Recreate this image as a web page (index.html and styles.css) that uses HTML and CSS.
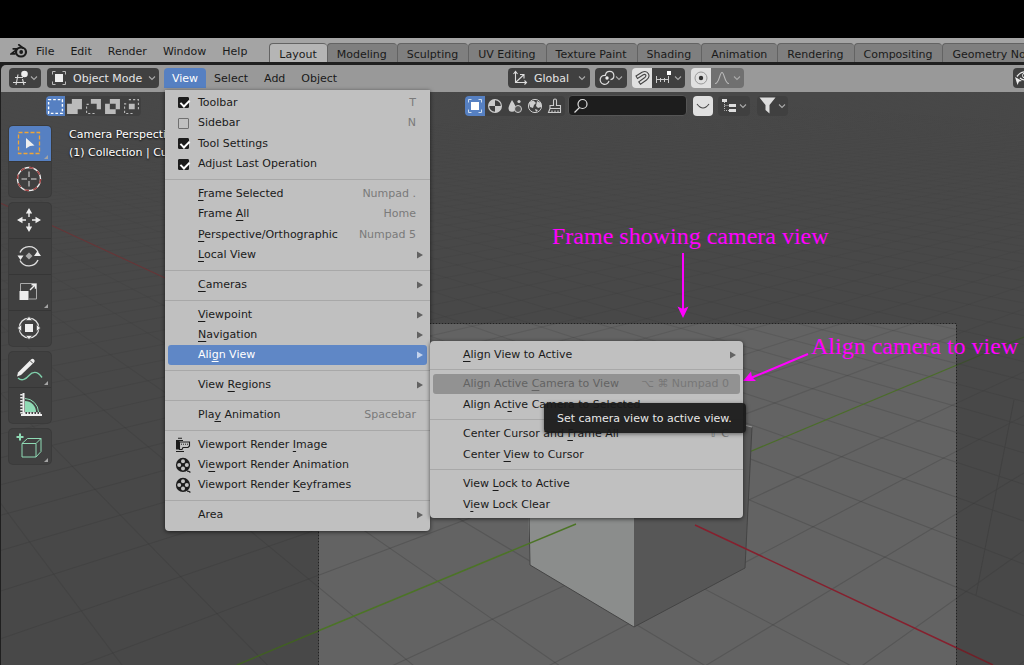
FILE: index.html
```html
<!DOCTYPE html>
<html lang="en">
<head>
<meta charset="utf-8">
<title>Blender – Align View</title>
<link rel="stylesheet" href="styles.css">
</head>
<body>
<svg class="defs" aria-hidden="true">
  <defs>
    <symbol id="chev" viewBox="0 0 8 8"><path d="M1 2.5 4 5.5 7 2.5" fill="none" stroke="currentColor" stroke-width="1.1"/></symbol>
    <symbol id="arrow" viewBox="0 0 6 8"><path d="M0 .5 6 4 0 7.500z" fill="currentColor"/></symbol>
    <symbol id="reel" viewBox="0 0 16 16"><path fill-rule="evenodd" fill="currentColor" d="M8 .8a7.1 7.1 0 1 0 0 14.2A7.1 7.1 0 1 0 8 .8zM8 2.2a2 2 0 1 1 0 4 2 2 0 1 1 0-4zM8 9.6a2 2 0 1 1 0 4 2 2 0 1 1 0-4zM4.2 5.9a2 2 0 1 1 0 4 2 2 0 1 1 0-4zM11.8 5.9a2 2 0 1 1 0 4 2 2 0 1 1 0-4z"/><path d="M12 14.2q2-.4 3.4 1.3" fill="none" stroke="currentColor" stroke-width="1.2"/></symbol>
  </defs>
</svg>

<div class="screen-top"></div>

<header class="topbar">
  <svg class="logo" viewBox="0 0 18 16" aria-label="Blender"><g fill="none" stroke="#1c1c1c" stroke-linecap="round"><ellipse cx="11" cy="9" rx="5" ry="4.500" stroke-width="2.200"/><path d="M7.500 5.800H3.200M13 5 8.800 1.800M7.600 5.800 1.400 10.800H5" stroke-width="1.700"/></g><circle cx="11.200" cy="9" r="1.900" fill="#1c1c1c"/></svg>
  <nav class="menubar" aria-label="Application">
    <button>File</button><button>Edit</button><button>Render</button><button>Window</button><button>Help</button>
  </nav>
  <nav class="tabs" aria-label="Workspaces">
    <button class="tab active">Layout</button><button class="tab">Modeling</button><button class="tab">Sculpting</button><button class="tab">UV Editing</button><button class="tab">Texture Paint</button><button class="tab">Shading</button><button class="tab">Animation</button><button class="tab">Rendering</button><button class="tab">Compositing</button><button class="tab">Geometry Nodes</button>
  </nav>
</header>

<main class="editor">
  <div class="editor-header">
    <button class="btn editor-type" aria-label="Editor type">
      <svg width="17" height="16" viewBox="0 0 17 16"><g fill="none" stroke="#ddd" stroke-width="1.1"><path d="M2 7.5h8M0 12.5h13M5 4.500 3 15M9.500 9 11 15"/></g><circle cx="11.500" cy="4" r="3.300" fill="#eee"/></svg>
      <svg width="8" height="8"><use href="#chev"/></svg>
    </button>
    <button class="btn mode">
      <svg width="16" height="16" viewBox="0 0 16 16"><path d="M1.500 4.500v-3h3M11.500 1.500h3v3M14.500 11.500v3h-3M4.500 14.500h-3v-3" fill="none" stroke="#bbb"/><path d="M4 4h8v8H4z" fill="#eee"/></svg>
      <span class="grow">Object Mode</span>
      <svg width="8" height="8"><use href="#chev"/></svg>
    </button>
    <nav class="menubar editor-menus" aria-label="Editor">
      <div class="menu-anchor">
        <button class="open" aria-expanded="true">View</button>
        <div class="menu view-menu">
          <div class="group g4">
            <label class="item"><input type="checkbox" class="tick" checked><span>Toolbar</span><kbd>T</kbd></label>
            <label class="item"><input type="checkbox" class="tick"><span>Sidebar</span><kbd>N</kbd></label>
            <label class="item"><input type="checkbox" class="tick" checked><span>Tool Settings</span></label>
            <label class="item"><input type="checkbox" class="tick" checked><span>Adjust Last Operation</span></label>
          </div>
          <div class="group g4">
            <button class="item"><span><u>F</u>rame Selected</span><kbd>Numpad .</kbd></button>
            <button class="item"><span>Frame <u>A</u>ll</span><kbd>Home</kbd></button>
            <button class="item"><span><u>P</u>erspective/Orthographic</span><kbd>Numpad 5</kbd></button>
            <button class="item"><span><u>L</u>ocal View</span><svg class="more"><use href="#arrow"/></svg></button>
          </div>
          <div class="group">
            <button class="item"><span><u>C</u>ameras</span><svg class="more"><use href="#arrow"/></svg></button>
          </div>
          <div class="group g3">
            <button class="item"><span><u>V</u>iewpoint</span><svg class="more"><use href="#arrow"/></svg></button>
            <button class="item"><span><u>N</u>avigation</span><svg class="more"><use href="#arrow"/></svg></button>
            <div class="menu-anchor">
              <button class="item hot" aria-expanded="true"><span>Ali<u>g</u>n View</span><svg class="more"><use href="#arrow"/></svg></button>
              <div class="menu submenu">
                <div class="group">
                  <button class="item"><span><u>A</u>lign View to Active</span><svg class="more"><use href="#arrow"/></svg></button>
                </div>
                <div class="group g2">
                  <div class="menu-anchor">
                    <button class="item dim" aria-describedby="tip"><span>Align Active <u>C</u>amera to View</span><kbd>⌥ ⌘ Numpad 0</kbd></button>
                    <div class="tooltip" id="tip" role="tooltip">Set camera view to active view.</div>
                  </div>
                  <button class="item"><span>Align Ac<u>t</u>ive Camera to Selected</span></button>
                </div>
                <div class="group g2">
                  <button class="item"><span>Center Cursor and <u>F</u>rame All</span><kbd>⇧ C</kbd></button>
                  <button class="item"><span>Center <u>V</u>iew to Cursor</span></button>
                </div>
                <div class="group g2">
                  <button class="item"><span>View <u>L</u>ock to Active</span></button>
                  <button class="item"><span>V<u>i</u>ew Lock Clear</span></button>
                </div>
              </div>
            </div>
          </div>
          <div class="group">
            <button class="item"><span>View <u>R</u>egions</span><svg class="more"><use href="#arrow"/></svg></button>
          </div>
          <div class="group">
            <button class="item"><span>Pla<u>y</u> Animation</span><kbd>Spacebar</kbd></button>
          </div>
          <div class="group g3">
            <button class="item"><svg class="lead" viewBox="0 0 16 16"><path d="M1 3.500h3.500v9H1z" fill="#1c1c1c"/><path d="M3 1.200h4M1 3.500h7M1 14.500h8M4.500 12.500H7l1-2h5l1.500-1.500V5H4.500z" fill="none" stroke="#1c1c1c" stroke-width="1.100"/><path d="M6 7.200h7" stroke="#1c1c1c" stroke-dasharray="1 1"/></svg><span>Viewport Render <u>I</u>mage</span></button>
            <button class="item"><svg class="lead"><use href="#reel"/></svg><span>Vi<u>e</u>wport Render Animation</span></button>
            <button class="item"><svg class="lead"><use href="#reel"/></svg><span>Viewport Render <u>K</u>eyframes</span></button>
          </div>
          <div class="group">
            <button class="item"><span>Area</span><svg class="more"><use href="#arrow"/></svg></button>
          </div>
        </div>
      </div>
      <button>Select</button><button>Add</button><button>Object</button>
    </nav>
    <div class="space-a"></div>
    <div class="controls">
      <button class="btn orient">
        <svg width="16" height="16" viewBox="0 0 16 16" fill="none" stroke="#ddd" stroke-width="1.100"><path d="M3.500 13V2M1.500 4l2-2.500 2 2.500M3.500 12.500h11M12.500 10.500l2 2-2 2M3.500 12.500l8-7.500M8 4.500h4v4"/></svg>
        <span class="grow">Global</span>
        <svg width="8" height="8"><use href="#chev"/></svg>
      </button>
      <button class="btn pivot" aria-label="Pivot point">
        <svg width="16" height="16" viewBox="0 0 16 16" fill="none" stroke="#ddd" stroke-width="1.200"><path d="M7 5.500A4.500 4.500 0 1 0 10 11"/><path d="M6.500 5A4.200 4.200 0 1 1 11.500 9.700"/><circle cx="8" cy="8" r="1.700" fill="#eee" stroke="none"/></svg>
        <svg width="8" height="8"><use href="#chev"/></svg>
      </button>
      <div class="pair">
        <button class="btn lit" aria-label="Snap"><svg width="16" height="16" viewBox="0 0 16 16" fill="none" stroke="#444" stroke-width="1.100"><path d="M2 6 8 2.300C14-.5 17.500 6.500 12.500 10L6.500 14.200 4.800 11.800 10.800 7.500C13 5.500 11.300 3.500 9.300 4.800L3.500 8.500z"/></svg></button>
        <button class="btn snap-to" aria-label="Snap to">
          <svg width="17" height="16" viewBox="0 0 17 16"><path d="M1 9.500h13M1.500 6v7M5.500 8v4M9.500 8v4M13.500 6v7" stroke="#ccc" fill="none"/><path d="M12 1h4v4h-4z" fill="#fff"/></svg>
          <svg width="8" height="8"><use href="#chev"/></svg>
        </button>
      </div>
      <div class="pair">
        <button class="btn lit" aria-label="Proportional editing"><svg width="16" height="16" viewBox="0 0 16 16"><circle cx="8" cy="8" r="6" fill="none" stroke="#999"/><circle cx="8" cy="8" r="2.200" fill="#333"/></svg></button>
        <button class="btn falloff" aria-label="Falloff">
          <svg width="16" height="16" viewBox="0 0 16 16"><path d="M1 13.500C5.500 13.500 5.500 2.500 8 2.500S10.500 13.500 15 13.500" fill="none" stroke="#bbb" stroke-width="1.100"/></svg>
          <svg width="8" height="8"><use href="#chev"/></svg>
        </button>
      </div>
    </div>
    <div class="space-b"></div>
    <button class="btn visibility" aria-label="Object visibility"><svg width="16" height="16" viewBox="0 0 16 16"><path d="M3 6.500q5-7 13-3.500M6 8q5 4 10 0" fill="none" stroke="#eee" stroke-width="1.300"/><circle cx="11" cy="5.500" r="2.500" fill="none" stroke="#eee"/><path d="M1 7l7 4-3 .5L3.500 15z" fill="#eee"/></svg></button>
  </div>

  <section class="viewport">
    <svg class="scene" aria-hidden="true">
      <defs>
        <linearGradient id="fade" gradientUnits="userSpaceOnUse" x1="0" y1="100" x2="0" y2="480">
          <stop offset="0" stop-color="#333" stop-opacity="0.02"/>
          <stop offset="0.300" stop-color="#333" stop-opacity="0.100"/>
          <stop offset="1" stop-color="#333" stop-opacity="0.270"/>
        </linearGradient>
      </defs>
      <g transform="translate(0 -92)">
        <rect x="318" y="323" width="639" height="400" fill="#636363"/>
        <g id="floor" fill="none" stroke="url(#fade)" stroke-width="1.200"></g>
        <path d="M0 203 55 227 163 277 200 294" stroke="#663638" stroke-width="1.200" fill="none"/>
        <path d="M742 455 957 365" stroke="#4b6d29" stroke-width="1.300"/>
        <path d="M957 365 1024 337" stroke="#3c4e2e" stroke-width="1.200"/>
        <path d="M1014 400 976 595" stroke="#414141"/>
        <path d="M528 515 530 565 634 627V515z" fill="#8b8d8c"/>
        <path d="M634 515V627L745 568 752 427 740 423V515z" fill="#575757"/>
        <path d="M529 515 530 565 634 627 745 568 752 427" fill="none" stroke="#444" stroke-width="1"/>
        <path d="M744 425 752 427" stroke="#999"/>
        <path d="M576 524 318 631" stroke="#4c7426" stroke-width="1.400"/>
        <path d="M318 631 237 665" stroke="#416023" stroke-width="1.400"/>
        <path d="M695 525 957 648" stroke="#86202e" stroke-width="1.400"/>
        <path d="M957 648 993 665" stroke="#702028" stroke-width="1.400"/>
        <rect x="318.500" y="323.500" width="638" height="400" fill="none" stroke="#222" stroke-dasharray="2 1"/>
      </g>
    </svg>

    <div class="tool-header">
      <div class="strip" role="group" aria-label="Selection mode">
        <button class="cell on" aria-label="Set"><svg viewBox="0 0 16 16"><path d="M1.500 1.500h13v13h-13z" fill="none" stroke="#fff" stroke-width="1.300" stroke-dasharray="2.500 1.800"/></svg></button>
        <button class="cell" aria-label="Extend"><svg viewBox="0 0 16 16"><path d="M5.500 1H15v9.500h-4V15H1V5.500h4.500z" fill="#bbb"/></svg></button>
        <button class="cell" aria-label="Subtract"><svg viewBox="0 0 16 16"><path d="M5.500 1H15v9.500h-4v-5H5.500z" fill="#bbb"/><path d="M9 14.500H1.500V6H4" fill="none" stroke="#bbb" stroke-dasharray="2 2"/></svg></button>
        <button class="cell" aria-label="Difference"><svg viewBox="0 0 16 16"><path fill-rule="evenodd" d="M5.500 1H15v9.500h-4V15H1V5.500h4.500zM5.500 5.500v5h5.500v-5z" fill="#bbb"/></svg></button>
        <button class="cell" aria-label="Intersect"><svg viewBox="0 0 16 16"><path d="M5.500 5.500h5.500v5H5.500z" fill="#bbb"/><path d="M5.500 1.500h9V11H13M3 5.500H1.500v9H11" fill="none" stroke="#bbb" stroke-dasharray="2 2"/></svg></button>
      </div>
      <div class="space-c"></div>
      <div class="strip" role="group" aria-label="Properties">
        <button class="cell on" aria-label="Object"><svg viewBox="0 0 16 16"><path d="M1.500 4.500v-3h3M11.500 1.500h3v3M14.500 11.500v3h-3M4.500 14.500h-3v-3" fill="none" stroke="#cde"/><path d="M4 4h8v8H4z" fill="#fff"/></svg></button>
        <button class="cell" aria-label="Material"><svg viewBox="0 0 16 16"><circle cx="8" cy="8" r="6.400" fill="none" stroke="#ccc" stroke-width="1.200"/><path d="M8 1.600V8h6.400A6.400 6.400 0 0 1 8 14.400V8H1.600A6.400 6.400 0 0 1 8 1.600z" fill="#ccc"/></svg></button>
        <button class="cell" aria-label="Effects"><svg viewBox="0 0 16 16"><path d="M5 2q4 6 3.500 8A3.500 3.500 0 0 1 1.500 10.500Q1.500 8 5 2z" fill="#ccc"/><circle cx="11" cy="11" r="3.500" fill="#555" stroke="#ccc"/><circle cx="12" cy="3.500" r="1.600" fill="#ccc"/></svg></button>
        <button class="cell" aria-label="World"><svg viewBox="0 0 16 16"><circle cx="8" cy="8" r="6.600" fill="none" stroke="#ccc"/><path d="M2 5q3-3 5-2l2 2-2 2-1 3-3-1zM10 3l4 2v4l-3 1-2-2zM8 11l3 1-2 2z" fill="#ccc"/></svg></button>
        <button class="cell" aria-label="Brush"><svg viewBox="0 0 16 16"><path d="M6.500 7.500V2.500a1.500 1.500 0 0 1 3 0v5h4v3H3v-3zM3 10.500 1.500 14.500h12v-4M5 14.500v-2M8 14.500v-2M11 14.500v-2" fill="none" stroke="#ccc" stroke-width="1.100"/></svg></button>
      </div>
      <div class="search">
        <svg width="16" height="16" viewBox="0 0 16 16"><circle cx="9.500" cy="6" r="4.500" fill="none" stroke="#ddd" stroke-width="1.200"/><path d="M6.500 9.500 1.500 14.500" stroke="#ddd" stroke-width="1.300"/></svg>
        <input type="text" aria-label="Search">
      </div>
      <button class="btn lit smile" aria-label="Show"><svg width="16" height="16" viewBox="0 0 16 16"><path d="M2 6q6 8 12 0" fill="none" stroke="#444" stroke-width="1.100"/></svg></button>
      <button class="btn tree" aria-label="Display mode"><svg width="17" height="16" viewBox="0 0 17 16"><path d="M1 1h5v3H1zM8 6h7v3H8zM8 11h7v3H8z" fill="#ddd"/><path d="M3.500 4v8.500H8M3.500 7.500H8" fill="none" stroke="#bbb" stroke-dasharray="1 1"/></svg><svg width="8" height="8"><use href="#chev"/></svg></button>
      <button class="btn filter" aria-label="Filter"><svg width="17" height="17" viewBox="0 0 17 17"><path d="M.5.500h16L10.500 8v8.500L6.500 13V8z" fill="#ddd"/></svg><svg width="8" height="8"><use href="#chev"/></svg></button>
      <div class="space-d"></div>
    </div>

    <div class="stage">
      <div class="toolbar">
        <div class="tools">
          <button class="tool on corner" aria-label="Select box"><svg viewBox="0 0 32 32"><path d="M5.500 5.500h21v21h-21z" fill="none" stroke="#f0a536" stroke-width="1.300" stroke-dasharray="4 2"/><path d="M13 11 21.500 18.500l-4.500.5L13 21.500z" fill="#eee"/></svg></button>
          <button class="tool" aria-label="Cursor"><svg viewBox="0 0 32 32" fill="none"><circle cx="16" cy="16" r="11.500" stroke="#eee" stroke-width="1.400"/><circle cx="16" cy="16" r="11.500" stroke="#a04040" stroke-width="1.400" stroke-dasharray="4.500 4.500"/><path d="M16 8.500V14M16 18v5.500M8.500 16H14M18 16h5.500" stroke="#ddd"/></svg></button>
        </div>
        <div class="tools">
          <button class="tool" aria-label="Move"><svg viewBox="0 0 32 32"><path d="M16 4l3.200 5.500h-6.400zM16 28l3.200-5.500h-6.400zM4 16l5.500-3.200v6.400zM28 16l-5.500-3.200v6.400z" fill="#eee"/><path d="M16 9v4M16 19v4M9 16h4M19 16h4" stroke="#eee" stroke-width="1.400"/></svg></button>
          <button class="tool" aria-label="Rotate"><svg viewBox="0 0 32 32"><path d="M7 12.500A10 10 0 0 1 25 12M25 20A10 10 0 0 1 7 20.500" fill="none" stroke="#ddd" stroke-width="1.400"/><path d="M4.500 15.500h6L7.500 20zM21 16l3.500-5 3.500 5z" fill="#eee"/><path d="M16 12.500 19.500 16 16 19.500 12.500 16z" fill="#aaa"/></svg></button>
          <button class="tool corner" aria-label="Scale"><svg viewBox="0 0 32 32"><path d="M7.500 17V7.500h16V23H16" fill="none" stroke="#aaa"/><path d="M6.500 15h9v9h-9z" fill="#eee"/><path d="M17 14l5-5M18.500 8.800h4v4" fill="none" stroke="#eee" stroke-width="1.400"/></svg></button>
          <button class="tool" aria-label="Transform"><svg viewBox="0 0 32 32"><circle cx="16" cy="16" r="9.800" fill="none" stroke="#ddd" stroke-width="1.300"/><path d="M16 4.500l3.500 4h-7zM16 27.500l3.500-4h-7zM4.500 16l4-3.500v7zM27.500 16l-4-3.500v7z" fill="#eee" stroke="#404040" stroke-width=".6"/><path d="M12 12h8v8h-8z" fill="#eee"/></svg></button>
        </div>
        <div class="tools">
          <button class="tool corner" aria-label="Annotate"><svg viewBox="0 0 32 32"><path d="M5 19.500 18 6.500a2 2 0 0 1 3 3L8 22l-4 1.500z" fill="#eee"/><path d="M17 7.500l3 3" stroke="#404040"/><path d="M5 25c4 3.500 8 1 11-2.500s8-5.500 13 2" fill="none" stroke="#7fceaa" stroke-width="1.400"/></svg></button>
          <button class="tool" aria-label="Measure"><svg viewBox="0 0 32 32"><path d="M12 22V12A11 11 0 0 1 23 23H12z" fill="#8fdbb5"/><path d="M12 9.500A14 14 0 0 1 25.500 23" fill="none" stroke="#8fdbb5"/><path d="M10.500 4v22M8 26h21" stroke="#eee" stroke-width="2" fill="none"/><path d="M8.500 5v20" stroke="#eee" stroke-width="2.500" stroke-dasharray="1.500 1.500"/><path d="M11 24.500h18" stroke="#eee" stroke-width="2.500" stroke-dasharray="1.500 1.500"/></svg></button>
        </div>
        <div class="tools">
          <button class="tool corner" aria-label="Add cube"><svg viewBox="0 0 32 32" fill="none" stroke="#8fdbb5"><path d="M3.500 7h7M7 3.500v7" stroke-width="2"/><path d="M9 13.500h14V27H9zM9 13.500 14.500 8.500H28L23 13.500M28 8.500v13L23 27"/></svg></button>
        </div>
      </div>
      <div class="view-info">Camera Perspective<br>(1) Collection | Cube</div>
    </div>

    <div class="note note-frame">Frame showing camera view</div>
    <div class="note note-align">Align camera to view</div>
    <svg class="scene arrows" aria-hidden="true"><g transform="translate(0 -92)" stroke="#f0f" fill="#f0f">
      <path d="M683 253v56" stroke-width="2"/><path d="M683 318l-5.500-11.500 5.500 2.500 5.500-2.500z" stroke="none"/>
      <path d="M808 354 752 377.500" stroke-width="2"/><path d="M743 381l8-9.500 1 5.500 4 4z" stroke="none"/>
    </g></svg>
  </section>
</main>
<script src="grid.js"></script>
</body>
</html>
```
FILE: styles.css
```css
* { box-sizing: border-box; }
html, body { height: 100%; }
body {
  margin: 0;
  display: flex;
  flex-direction: column;
  overflow: hidden;
  background: #1f1f1f;
  color: #1a1a1a;
  font: 11px/20px "DejaVu Sans", sans-serif;
}
button, input, kbd { font: inherit; color: inherit; }
button { border: 0; padding: 0; background: none; white-space: nowrap; }
svg { display: block; flex: none; }
.defs { position: absolute; width: 0; height: 0; }
.screen-top { flex: none; height: 38px; background: #000; }

/* application bar */
.topbar { flex: none; display: flex; height: 24px; padding-left: 10px; background: #a4a4a4; }
.logo { width: 18px; height: 16px; margin-top: 5px; }
.menubar { display: flex; flex: none; }
.menubar > button, .menubar > .menu-anchor > button { height: 20px; padding: 2px 8px 0; line-height: 18px; }
.topbar .menubar { padding: 3px 0 1px; }
.tabs { display: flex; flex: 1; min-width: 0; margin: 5px 0 0 14px; overflow: hidden; }
.tab { flex: none; padding: 2px 10px 0 9px; background: #7f7f7f; border: 1px solid #636363; border-width: 1px 0 0 1px; border-radius: 4px 4px 0 0; line-height: 18px; }
.tab.active { background: #b5b5b5; }

/* editor */
.editor { flex: 1; min-height: 0; display: flex; flex-direction: column; margin: 3px 0 0 1px; }
.editor-header { position: relative; z-index: 2; flex: none; display: flex; align-items: center; height: 27px; padding: 0 0 1px 8px; background: #999; border-radius: 5px 0 0 0; }
.btn { display: flex; align-items: center; justify-content: space-between; flex: none; height: 20px; padding: 0 4px; background: #404040; color: #e4e4e4; border-radius: 4px; text-align: left; }
.btn svg:last-child:not(:first-child) { color: #aaa; }
.editor-type { width: 32px; margin-right: 6px; }
.mode { width: 112px; margin-right: 5px; gap: 6px; }
.grow { flex: 1; padding-top: 2px; line-height: 18px; }
.menu-anchor { position: relative; }
.menubar .open { background: #5680c2; color: #fff; border-radius: 4px 4px 0 0; }
.space-a { flex: 49; }
.space-b { flex: 81; }
.controls { display: flex; gap: 5px; }
.orient { width: 82px; gap: 6px; }
.pivot { width: 32px; }
.pair { display: flex; }
.lit { width: 20px; padding: 0 2px; background: #e0e0e0; }
.pair .lit { border-radius: 4px 0 0 4px; }
.snap-to, .falloff { width: 33px; border-radius: 0 4px 4px 0; padding: 0 3px; }
.falloff { background: #707070; }
.pair + .pair { margin-left: 1px; }
.visibility { width: 11px; padding: 0 1px; overflow: hidden; border-radius: 4px 0 0 4px; }

/* menus */
.menu { position: absolute; z-index: 5; padding: 3px; background: #c0c0c0; border-radius: 0 0 4px 4px; box-shadow: 0 1px 4px rgba(0, 0, 0, .6); }
.view-menu { top: calc(100% + 1px); left: 1px; width: 265px; padding-bottom: 5px; }
.submenu { top: -4px; left: calc(100% + 3px); width: 313px; border-radius: 4px; }
.group { display: grid; min-height: 21px; }
.g2 { min-height: 41px; }
.g3 { min-height: 61px; }
.g4 { min-height: 82px; }
.group + .group { margin-top: 9px; position: relative; }
.group + .group::before { content: ""; position: absolute; top: -5px; left: -3px; right: -3px; height: 1px; background: #a8a8a8; }
.item { position: relative; display: flex; align-items: center; width: 100%; min-height: 20px; padding: 0 11px 0 30px; border-radius: 3px; line-height: 18px; text-align: left; white-space: nowrap; }
.item > span { flex: 1; }
.item u { text-underline-offset: 3px; text-decoration-skip-ink: none; }
.item kbd { color: #7a7a7a; }
.more { position: absolute; right: 4px; width: 6px; height: 8px; color: #626262; }
.lead { position: absolute; left: 7px; width: 16px; height: 16px; color: #1c1c1c; }
.hot { background: #5f87c6; color: #fff; }
.hot .more { color: #c4d3ec; }
.dim { background: #929292; color: #636363; }
.dim kbd { color: #777; }
.tick { appearance: none; position: absolute; left: 10px; width: 11px; height: 11px; margin: 0; border: 1px solid #707070; border-radius: 1px; }
.tick:checked { background: #1c1c1c; border-color: #1c1c1c; }
.tick:checked::before { content: ""; position: absolute; left: 3px; top: 0; width: 4px; height: 7px; border: solid #fff; border-width: 0 2px 2px 0; transform: rotate(45deg); }
.tooltip { position: absolute; z-index: 9; top: 29px; left: 111px; padding: 6px 14px 4px 13px; background: rgba(26, 26, 26, .95); color: #e8e8e8; border-radius: 4px; white-space: nowrap; box-shadow: 0 1px 4px rgba(0, 0, 0, .5); }

/* viewport */
.viewport { position: relative; flex: 1; min-height: 0; background: #484848; overflow: hidden; }
.scene { position: absolute; top: 0; left: -1px; width: calc(100% + 1px); height: 100%; }
.arrows { pointer-events: none; }
.tool-header { position: relative; display: flex; align-items: center; padding: 3px 0 0 45px; }
.strip { display: flex; background: #404040; border-radius: 4px; overflow: hidden; }
.cell { width: 20px; height: 20px; padding: 2px; }
.strip:first-child .cell { width: 19px; padding: 2px 1px; }
.cell.on { background: #5680c2; }
.space-c { flex: 11; }
.space-d { flex: 8; }
.search { display: flex; align-items: center; width: 119px; height: 21px; margin: 0 6px 0 3px; padding: 0 4px; background: #1d1d1d; border: 1px solid #555; border-radius: 4px; }
.search input { width: 100%; min-width: 0; border: 0; background: none; outline: 0; color: #ddd; }
.smile { margin-right: 5px; }
.tree { width: 32px; margin-right: 7px; padding: 0 3px; }
.filter { width: 31px; padding: 0 2px; }
.stage { position: relative; display: flex; align-items: flex-start; gap: 18px; padding: 10px 0 0 8px; }
.toolbar { display: flex; flex-direction: column; gap: 6px; }
.tools { display: flex; flex-direction: column; gap: 1px; background: #363636; border-radius: 4px; overflow: hidden; box-shadow: 0 0 0 1px #3b3b3b; }
.tool { position: relative; display: flex; justify-content: center; align-items: center; width: 42px; height: 35px; padding: 0 3px 1px 0; background: #404040; }
.tool svg { width: 32px; height: 32px; }
.tool.on { background: #5680c2; }
.corner::after { content: ""; position: absolute; right: 3px; bottom: 2px; border: solid transparent; border-width: 0 0 4px 4px; border-bottom-color: #a4a4a4; }
.view-info { color: #fff; line-height: 18px; text-shadow: 0 1px 2px #000; white-space: nowrap; }
.note { position: absolute; color: #f0f; font: 24px/28px "Liberation Serif", serif; white-space: nowrap; }
.note-frame { top: 130px; left: 551px; }
.note-align { top: 240px; left: 810px; }
```
FILE: grid.js
```js
// Perspective floor grid: one metre cells around the world origin.
(function () {
  var floor = document.getElementById('floor');
  var A = -0.0548, B = 0.051;
  function point(i, j) {
    var w = 1 + i * A + j * B;
    return ((638 - 350 * i * A + 1746 * j * B) / w).toFixed(1) + ' ' +
      ((498 + 36 * (i * A + j * B)) / w).toFixed(1);
  }
  function line(d) {
    var p = document.createElementNS('http://www.w3.org/2000/svg', 'path');
    p.setAttribute('d', d);
    floor.appendChild(p);
  }
  for (var n = -50; n <= 60; n++) {
    if (n === 0) continue;
    var j0 = (-0.4 - n * A) / B;
    line('M' + point(n, j0) + 'L' + point(n, j0 + 150));
    var i0 = (-0.4 - n * B) / A;
    line('M' + point(i0, n) + 'L' + point(i0 - 150, n));
  }
})();
```
